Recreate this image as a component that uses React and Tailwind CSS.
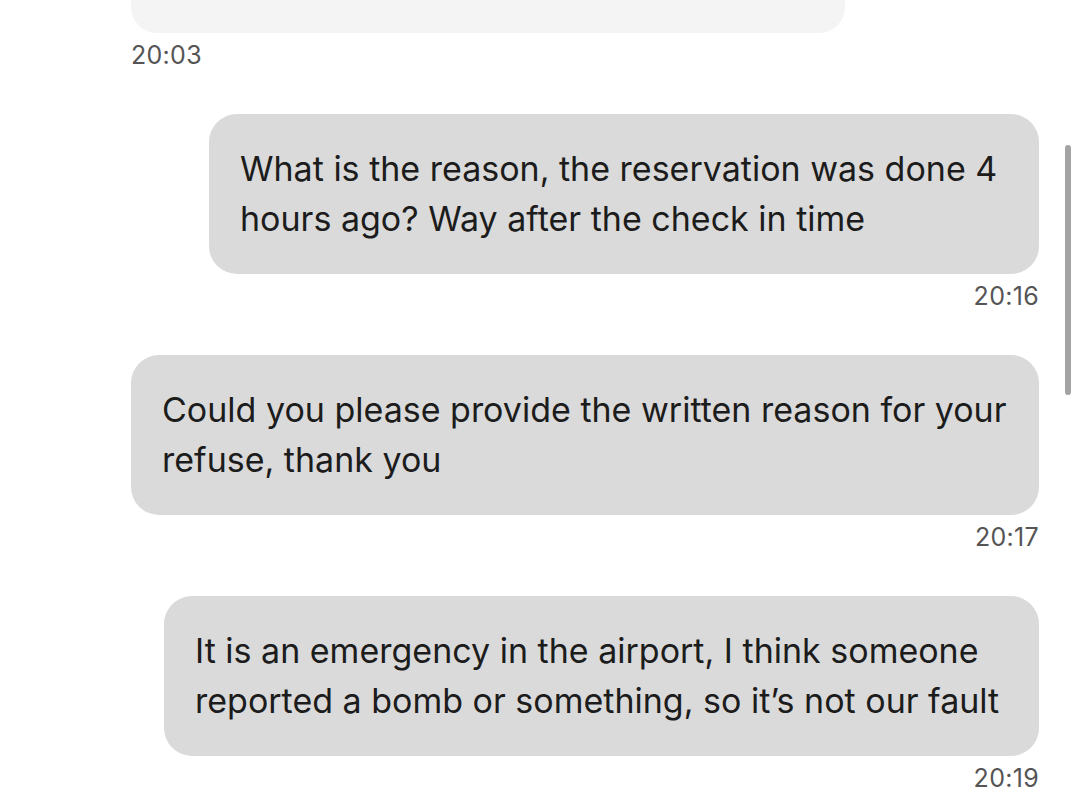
import React from 'react';

const messages = [
  {
    id: 1,
    width: 'w-[830px]',
    lines: ['What is the reason, the reservation was done 4', 'hours ago? Way after the check in time'],
    time: '20:16',
  },
  {
    id: 2,
    width: 'w-[908px]',
    lines: ['Could you please provide the written reason for your', 'refuse, thank you'],
    time: '20:17',
  },
  {
    id: 3,
    width: 'w-[875px]',
    lines: ['It is an emergency in the airport, I think someone', 'reported a bomb or something, so it\u2019s not our fault'],
    time: '20:19',
  },
];

const App = () => {
  return (
    <div className="relative min-h-screen w-full overflow-hidden bg-white font-['Inter','Noto_Sans',sans-serif] antialiased">
      <div className="flex flex-col pl-[131px] pr-[41px]">
        {/* previous message, scrolled mostly out of view */}
        <div className="h-[33px] w-[714px] rounded-b-[26px] bg-[#f4f4f4]" />
        <p className="mt-[8px] text-[25px] leading-[28px] tracking-[0.3px] text-[#555555]">20:03</p>

        <div className="mt-[45px] flex flex-col">
          {messages.map((msg) => (
            <div key={msg.id} className="flex flex-col items-end">
              <div className={`${msg.width} rounded-[28px] bg-[#dadada] px-[31px] py-[30px]`}>
                {msg.lines.map((line, i) => (
                  <p key={i} className="whitespace-nowrap text-[34px] leading-[50px] text-[#1c1c1c]">
                    {line}
                  </p>
                ))}
              </div>
              <p className="mt-[8px] mb-[45px] text-[25px] leading-[28px] tracking-[0.3px] text-[#555555]">{msg.time}</p>
            </div>
          ))}
        </div>
      </div>

      {/* scroll indicator */}
      <div className="absolute left-[1065px] top-[145px] h-[250px] w-[6px] rounded-full bg-[#a3a3a3]" />
    </div>
  );
};

export default App;
